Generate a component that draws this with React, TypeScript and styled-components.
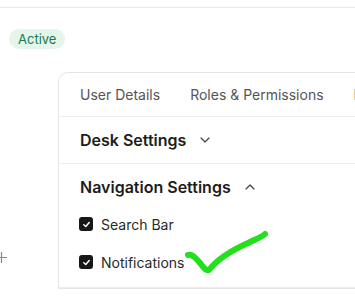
import React from "react";
import styled, { createGlobalStyle } from "styled-components";

const GlobalStyle = createGlobalStyle`
  html, body {
    margin: 0;
    padding: 0;
    background: #ffffff;
    font-family: Inter, "Noto Sans", sans-serif;
    overflow: hidden;
  }
`;

const Page = styled.div`
  position: relative;
  width: 355px;
  height: 298px;
  overflow: hidden;
`;

const TopBar = styled.div`
  height: 7px;
  border-bottom: 1px solid #e8e8e8;
`;

const StatusRow = styled.div`
  padding: 20px 0 0 9px;
  height: 44px;
`;

const Badge = styled.span`
  display: inline-flex;
  align-items: center;
  height: 20px;
  padding: 0 9px;
  border-radius: 10px;
  background: #e4f5e9;
  color: #1a7a50;
  font-size: 13px;
  font-weight: 400;
`;

const Body = styled.div`
  display: flex;
`;

const Side = styled.div`
  width: 62px;
  flex-shrink: 0;
  display: flex;
  flex-direction: column;
  justify-content: flex-end;
  padding-bottom: 26px;
  margin-left: -4px;
`;

const Card = styled.div`
  flex-shrink: 0;
  width: 420px;
  border: 1px solid #e6e6e6;
  border-radius: 10px 0 0 0;
  border-right: none;
`;

const Tabs = styled.div`
  display: flex;
  gap: 30px;
  height: 43px;
  align-items: center;
  padding-left: 21px;
  border-bottom: 1px solid #ececec;
  white-space: nowrap;
`;

const Tab = styled.span`
  font-size: 14px;
  color: #555555;
`;

const Section = styled.div<{ $open?: boolean }>`
  padding: 0 0 ${(p) => (p.$open ? "11px" : "0")} 21px;
  border-bottom: 1px solid #ececec;
`;

const SectionHead = styled.div`
  display: flex;
  align-items: center;
  gap: 13px;
  height: 46px;
`;

const SectionTitle = styled.span`
  font-size: 16px;
  font-weight: 600;
  color: #1c1c1c;
`;

const ItemList = styled.div`
  display: flex;
  flex-direction: column;
  gap: 10px;
  margin-left: -1px;
`;

const Item = styled.label`
  display: flex;
  align-items: center;
  gap: 8px;
  height: 28px;
  font-size: 14px;
  color: #2a2a2a;
`;

const Box = styled.span`
  width: 14px;
  height: 14px;
  border-radius: 3px;
  background: #171717;
  display: flex;
  align-items: center;
  justify-content: center;
`;

const Scribble = styled.svg`
  position: absolute;
  left: 180px;
  top: 225px;
`;

const Chevron = ({ up }: { up?: boolean }) => (
  <svg width="12" height="12" viewBox="0 0 12 12" fill="none">
    <path
      d={up ? "M2 8 L6 4 L10 8" : "M2 4 L6 8 L10 4"}
      stroke="#444"
      strokeWidth="1.2"
      strokeLinecap="round"
      strokeLinejoin="round"
    />
  </svg>
);

const Check = () => (
  <Box>
    <svg width="9" height="9" viewBox="0 0 10 10" fill="none">
      <path
        d="M2 5.3 L4.2 7.3 L8 2.8"
        stroke="#fff"
        strokeWidth="1.6"
        strokeLinecap="round"
        strokeLinejoin="round"
      />
    </svg>
  </Box>
);

export default function App() {
  return (
    <>
      <GlobalStyle />
      <Page>
        <TopBar />
        <StatusRow>
          <Badge>Active</Badge>
        </StatusRow>
        <Body>
          <Side>
            <svg width="11" height="11" viewBox="0 0 11 11">
              <path d="M5.5 0 V11 M0 5.5 H11" stroke="#8a8a8a" strokeWidth="1.2" />
            </svg>
          </Side>
          <Card>
            <Tabs>
              <Tab>User Details</Tab>
              <Tab>Roles &amp; Permissions</Tab>
              <Tab>Notifications</Tab>
            </Tabs>
            <Section>
              <SectionHead>
                <SectionTitle>Desk Settings</SectionTitle>
                <Chevron />
              </SectionHead>
            </Section>
            <Section $open>
              <SectionHead>
                <SectionTitle>Navigation Settings</SectionTitle>
                <Chevron up />
              </SectionHead>
              <ItemList>
                <Item>
                  <Check />
                  Search Bar
                </Item>
                <Item>
                  <Check />
                  Notifications
                </Item>
              </ItemList>
            </Section>
          </Card>
        </Body>
        <Scribble width="95" height="55" viewBox="0 0 95 55" fill="none">
          <path
            d="M8 30 C12 29 15 32 20 38 C24 43 26 46 29 45 C36 36 50 26 68 18 C76 14 82 12 85 9"
            stroke="#22e01c"
            strokeWidth="6"
            strokeLinecap="round"
            strokeLinejoin="round"
          />
        </Scribble>
      </Page>
    </>
  );
}
